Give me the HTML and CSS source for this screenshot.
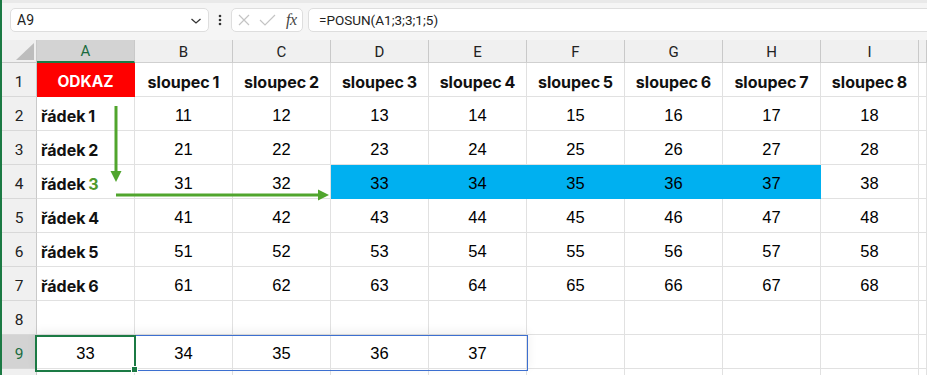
FILE: index.html
```html
<!DOCTYPE html>
<html lang="cs">
<head>
<meta charset="utf-8">
<title>POSUN</title>
<link rel="stylesheet" href="styles.css">
</head>
<body>
<div class="app">
  <div class="fbar">
    <div class="namebox">
      <span class="ref">A9</span>
      <svg class="chev" width="12" height="8" viewBox="0 0 12 8"><path d="M1.5 2 L6 6 L10.5 2" fill="none" stroke="#333" stroke-width="1.3"/></svg>
    </div>
    <div class="dots"><svg width="4" height="12" viewBox="0 0 4 12"><circle cx="2" cy="2" r="1.3" fill="#333"/><circle cx="2" cy="6" r="1.3" fill="#333"/><circle cx="2" cy="10" r="1.3" fill="#333"/></svg></div>
    <div class="fxbox">
      <svg width="14" height="12" viewBox="0 0 14 12"><path d="M2 1 L12 11 M12 1 L2 11" stroke="#c4c4c4" stroke-width="1.2" fill="none"/></svg>
      <svg width="17" height="12" viewBox="0 0 17 12"><path d="M1 6 L6 11 L16 1" stroke="#c4c4c4" stroke-width="1.2" fill="none"/></svg>
      <span class="fx">fx</span>
    </div>
    <div class="formula">=POSUN(A1;3;3;1;5)</div>
  </div>

  <div class="sheet">
    <div class="corner"><svg width="18" height="17" viewBox="0 0 18 17"><polygon points="18,0 18,17 0,17" fill="#bdbdbd"/></svg></div>
    <div class="ch sel">A</div><div class="ch">B</div><div class="ch">C</div><div class="ch">D</div><div class="ch">E</div><div class="ch">F</div><div class="ch">G</div><div class="ch">H</div><div class="ch">I</div><div class="ch"></div>

    <div class="rh">1</div>
    <div class="c hd red">ODKAZ</div><div class="c hd">sloupec 1</div><div class="c hd">sloupec 2</div><div class="c hd">sloupec 3</div><div class="c hd">sloupec 4</div><div class="c hd">sloupec 5</div><div class="c hd">sloupec 6</div><div class="c hd">sloupec 7</div><div class="c hd">sloupec 8</div><div class="c"></div>

    <div class="rh">2</div>
    <div class="c lbl">řádek 1</div><div class="c">11</div><div class="c">12</div><div class="c">13</div><div class="c">14</div><div class="c">15</div><div class="c">16</div><div class="c">17</div><div class="c">18</div><div class="c"></div>

    <div class="rh">3</div>
    <div class="c lbl">řádek 2</div><div class="c">21</div><div class="c">22</div><div class="c">23</div><div class="c">24</div><div class="c">25</div><div class="c">26</div><div class="c">27</div><div class="c">28</div><div class="c"></div>

    <div class="rh">4</div>
    <div class="c lbl">řádek <span class="g">3</span></div><div class="c">31</div><div class="c">32</div><div class="c blue">33</div><div class="c blue">34</div><div class="c blue">35</div><div class="c blue">36</div><div class="c blue">37</div><div class="c">38</div><div class="c"></div>

    <div class="rh">5</div>
    <div class="c lbl">řádek 4</div><div class="c">41</div><div class="c">42</div><div class="c">43</div><div class="c">44</div><div class="c">45</div><div class="c">46</div><div class="c">47</div><div class="c">48</div><div class="c"></div>

    <div class="rh">6</div>
    <div class="c lbl">řádek 5</div><div class="c">51</div><div class="c">52</div><div class="c">53</div><div class="c">54</div><div class="c">55</div><div class="c">56</div><div class="c">57</div><div class="c">58</div><div class="c"></div>

    <div class="rh">7</div>
    <div class="c lbl">řádek 6</div><div class="c">61</div><div class="c">62</div><div class="c">63</div><div class="c">64</div><div class="c">65</div><div class="c">66</div><div class="c">67</div><div class="c">68</div><div class="c"></div>

    <div class="rh">8</div>
    <div class="c"></div><div class="c"></div><div class="c"></div><div class="c"></div><div class="c"></div><div class="c"></div><div class="c"></div><div class="c"></div><div class="c"></div><div class="c"></div>

    <div class="rh sel">9</div>
    <div class="c">33</div><div class="c">34</div><div class="c">35</div><div class="c">36</div><div class="c">37</div><div class="c"></div><div class="c"></div><div class="c"></div><div class="c"></div><div class="c"></div>

    <div class="rh"></div>
    <div class="c"></div><div class="c"></div><div class="c"></div><div class="c"></div><div class="c"></div><div class="c"></div><div class="c"></div><div class="c"></div><div class="c"></div><div class="c"></div>

    <svg class="arrows" width="925" height="335" viewBox="0 0 925 335">
      <line x1="114" y1="66" x2="114" y2="133" stroke="#50a52d" stroke-width="3"/>
      <polygon points="108.5,131 119.5,131 114,142" fill="#50a52d"/>
      <line x1="114" y1="155" x2="318" y2="155" stroke="#50a52d" stroke-width="3"/>
      <polygon points="316,149.5 316,160.5 327,155" fill="#50a52d"/>
    </svg>
    <div class="spill"></div>
    <div class="cursel"></div>
    <div class="handle"></div>
  </div>
</div>
</body>
</html>
```

FILE: styles.css
```css
* { box-sizing: border-box; margin: 0; padding: 0; }

body {
  width: 927px;
  height: 375px;
  overflow: hidden;
  background: #ffffff;
  font-family: Roboto, "Liberation Sans", sans-serif;
  color: #000;
}

.app {
  border-left: 2px solid #1b7a44;
  height: 375px;
  overflow: hidden;
}

/* formula bar */
.fbar {
  height: 40px;
  background: #f5f5f5;
  border-top: 3px solid #e9e9e9;
  display: flex;
  align-items: flex-start;
  padding: 5px 0 0 8px;
}

.namebox {
  width: 199px;
  height: 24px;
  background: #fff;
  border: 1px solid #dedede;
  border-radius: 5px;
  display: flex;
  align-items: center;
  justify-content: space-between;
  padding: 0 6px 0 6px;
  font-size: 14px;
  color: #222;
}

.chev { margin-top: 2px; }

.dots {
  width: 22px;
  height: 24px;
  display: flex;
  align-items: center;
  justify-content: center;
}

.fxbox {
  width: 72px;
  height: 24px;
  background: #fff;
  border: 1px solid #dedede;
  border-radius: 5px;
  display: flex;
  align-items: center;
  padding: 0 0 0 5px;
  gap: 8px;
}

.fx {
  font-family: "Liberation Serif", serif;
  font-style: italic;
  font-size: 16px;
  color: #444;
  margin-left: 2px;
  letter-spacing: -0.5px;
}

.formula {
  flex: 1;
  height: 24px;
  margin-left: 5px;
  margin-right: -20px;
  background: #fff;
  border: 1px solid #dedede;
  border-radius: 5px;
  display: flex;
  align-items: center;
  padding-left: 10px;
  font-size: 13.5px;
  color: #222;
}

/* sheet grid */
.sheet {
  position: relative;
  display: grid;
  grid-template-columns: 35px repeat(9, 98px) 1fr;
  grid-template-rows: 23px repeat(9, 34px) 20px;
}

.corner {
  background: #efefef;
  border-right: 1px solid #c9c9c9;
  border-bottom: 1px solid #c9c9c9;
  display: flex;
  align-items: flex-end;
  justify-content: flex-end;
  padding: 0 2px 2px 0;
}

.ch {
  background: #f0f0f0;
  border-right: 1px solid #c9c9c9;
  border-bottom: 1px solid #d0d0d0;
  display: flex;
  align-items: center;
  justify-content: center;
  font-size: 15px;
  color: #222;
  padding-top: 1px;
}

.ch.sel {
  background: #d3d3d3;
  color: #1a6b3e;
  border-bottom: 2px solid #1b7a44;
}

.rh {
  background: #f0f0f0;
  border-right: 1px solid #c9c9c9;
  border-bottom: 1px solid #d8d8d8;
  display: flex;
  align-items: center;
  justify-content: center;
  font-size: 15.5px;
  color: #222;
  padding-top: 5px;
}

.rh.sel {
  background: #d3d3d3;
  color: #1a6b3e;
}

.c {
  border-right: 1px solid #e1e1e1;
  border-bottom: 1px solid #e1e1e1;
  display: flex;
  align-items: center;
  justify-content: center;
  font-family: "Liberation Sans", Arial, sans-serif;
  font-size: 16.5px;
  padding-top: 4px;
  white-space: nowrap;
}

.c.hd, .c.lbl {
  font-family: Inter, "Liberation Sans", sans-serif;
  font-size: 16px;
  font-weight: 700;
  color: #111;
  word-spacing: -1px;
}

.c.lbl {
  justify-content: flex-start;
  padding-left: 4px;
  white-space: pre;
}

.c.red {
  background: #ff0000;
  border-color: #ff0000;
  color: #fff;
  font-size: 15.5px;
  word-spacing: 0;
}

.c.blue {
  background: #00b0f0;
  border-color: #00b0f0;
}

.g { color: #4e9a2c; }

/* overlays */
.arrows {
  position: absolute;
  left: 0;
  top: 0;
  pointer-events: none;
}

.spill {
  position: absolute;
  left: 34px;
  top: 295px;
  width: 492px;
  height: 36px;
  border: 1px solid #3c6fd0;
  box-shadow: 0 -3px 10px rgba(0, 0, 0, 0.07);
}

.cursel {
  position: absolute;
  left: 33px;
  top: 295px;
  width: 101px;
  height: 37px;
  border: 2px solid #1b7a44;
}

.handle {
  position: absolute;
  left: 129px;
  top: 326px;
  width: 7px;
  height: 7px;
  background: #1b7a44;
  border: 1px solid #fff;
}
```
